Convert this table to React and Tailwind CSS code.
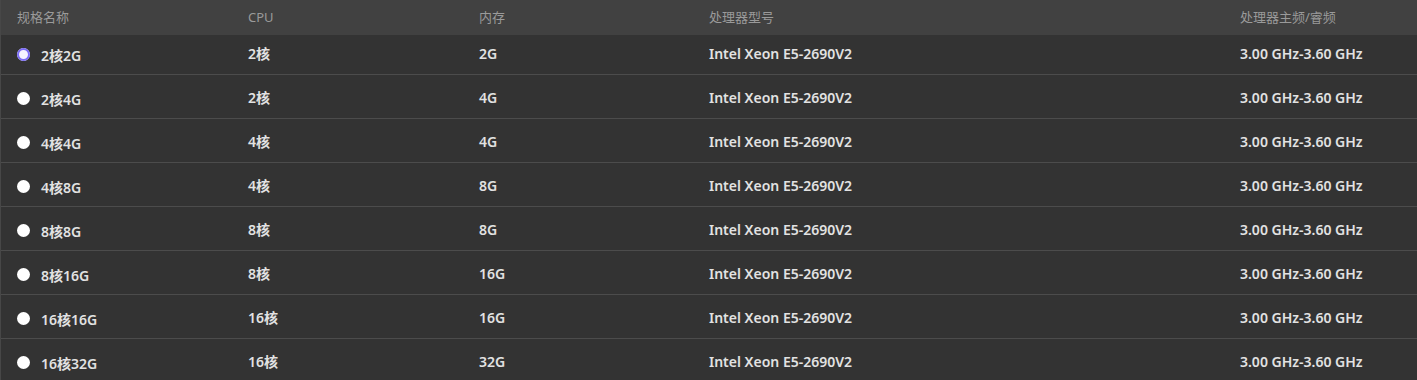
import { useState } from 'react';

const specs = [
    { name: '2核2G', cpu: '2核', mem: '2G' },
    { name: '2核4G', cpu: '2核', mem: '4G' },
    { name: '4核4G', cpu: '4核', mem: '4G' },
    { name: '4核8G', cpu: '4核', mem: '8G' },
    { name: '8核8G', cpu: '8核', mem: '8G' },
    { name: '8核16G', cpu: '8核', mem: '16G' },
    { name: '16核16G', cpu: '16核', mem: '16G' },
    { name: '16核32G', cpu: '16核', mem: '32G' },
];

const cols = 'grid grid-cols-[231px_231px_230px_531px_1fr]';

const App = () => {
    const [selected, setSelected] = useState(0);

    return (
        <div className="h-[380px] overflow-hidden bg-[#333333] border-l border-[#474747] font-['Noto_Sans','Noto_Sans_CJK_SC',sans-serif]">
            {/* Header */}
            <div className={`${cols} h-[35px] items-center bg-[#414141] text-[#9a9a9a] text-[13px] pl-[16px]`}>
                <div>规格名称</div>
                <div>CPU</div>
                <div>内存</div>
                <div>处理器型号</div>
                <div>处理器主频/睿频</div>
            </div>

            {/* Rows */}
            {specs.map((s, i) => (
                <div
                    key={s.name}
                    onClick={() => setSelected(i)}
                    className={`${cols} ${i === 0 ? 'h-[40px]' : 'h-[44px]'} items-end pb-[11px] pl-[16px] border-b border-[#4c4c4c] text-[#e2e2e2] text-[14px] leading-[18px] font-semibold cursor-pointer`}
                >
                    <label className="flex items-center gap-[11px] -mb-[2px] cursor-pointer">
                        <span className="w-[13px] h-[13px] rounded-full bg-white flex items-center justify-center shrink-0 -mt-[3px]">
                            {selected === i && (
                                <span className="w-[13px] h-[13px] rounded-full border-[2.5px] border-[#7b6cf6] bg-[#f4f2ff] block" />
                            )}
                        </span>
                        {s.name}
                    </label>
                    <div>{s.cpu}</div>
                    <div>{s.mem}</div>
                    <div>Intel Xeon E5-2690V2</div>
                    <div>3.00 GHz-3.60 GHz</div>
                </div>
            ))}
        </div>
    );
};

export default App;
